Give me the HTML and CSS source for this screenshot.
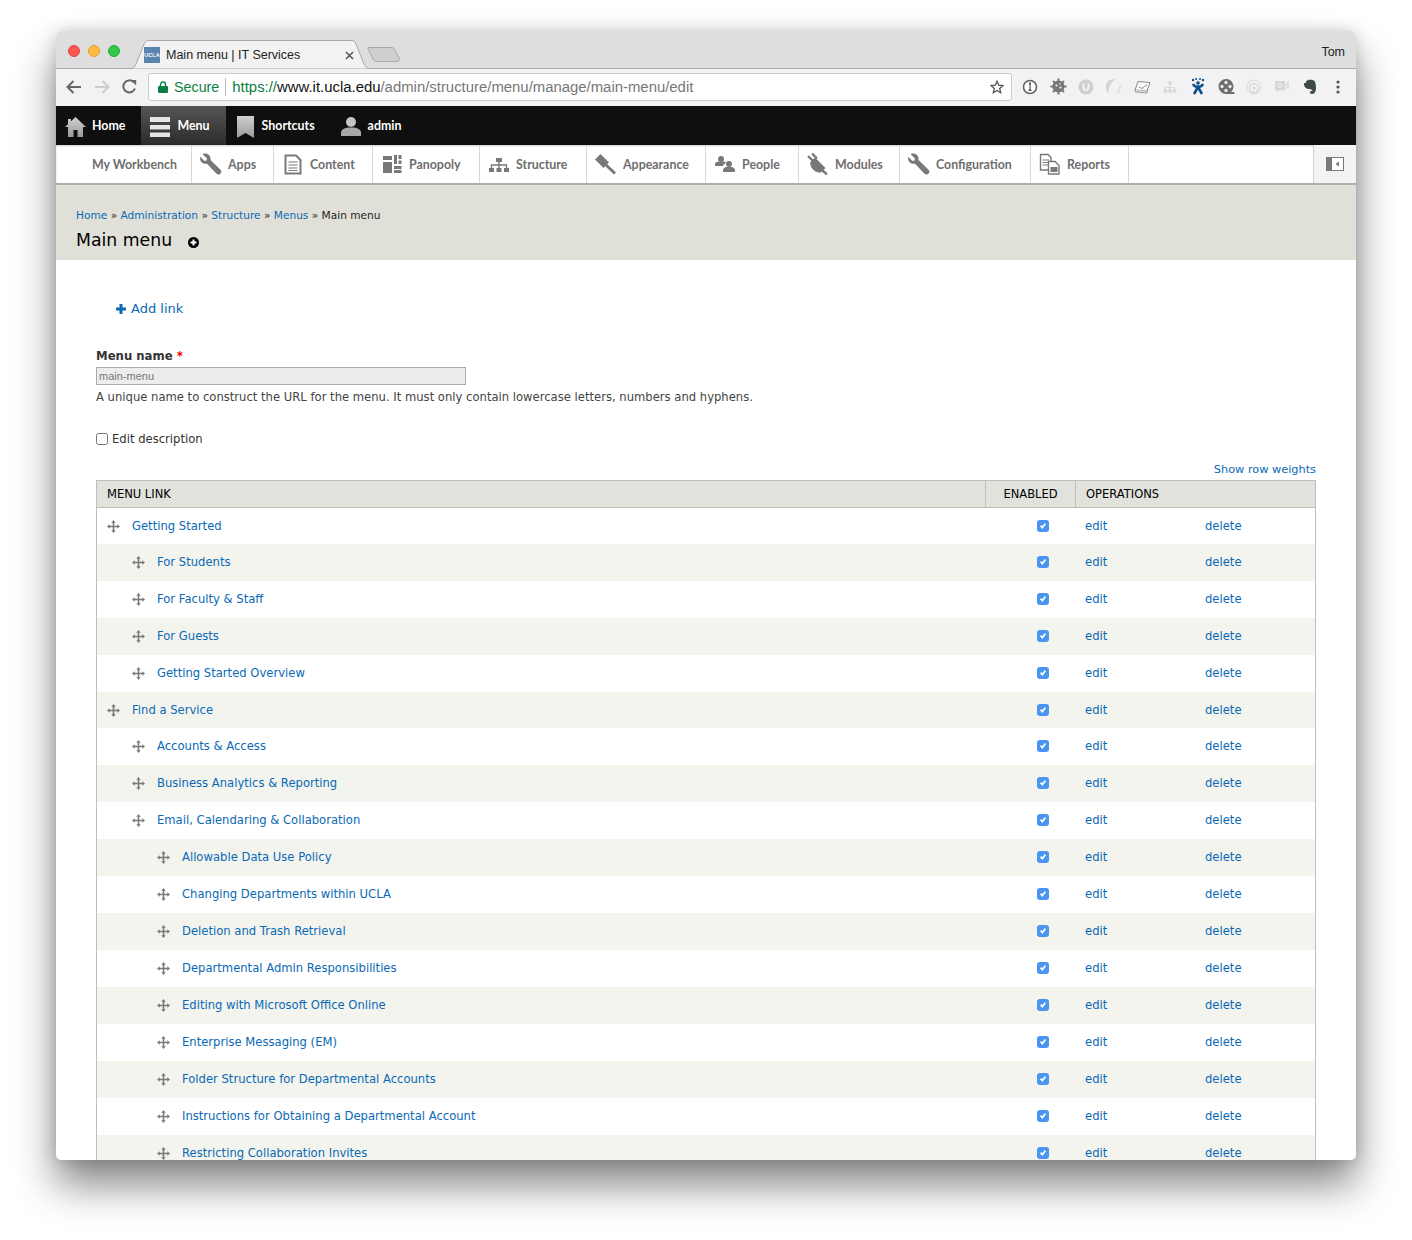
FILE: index.html
```html
<!DOCTYPE html>
<html lang="en">
<head>
<meta charset="utf-8">
<title>Main menu | IT Services</title>
<link rel="stylesheet" href="styles.css">
</head>
<body>
<svg class="defs" width="0" height="0" aria-hidden="true">
  <defs>
    <linearGradient id="grey" x1="0" y1="0" x2="0" y2="1"><stop offset="0" stop-color="#d0d0d0"/><stop offset="1" stop-color="#9a9a9a"/></linearGradient>
    <symbol id="drag" viewBox="0 0 13 13">
      <path d="M6.5 0 8.700 2.700H7.300V5.700H10.300V4.300L13 6.500 10.300 8.700V7.300H7.300V10.300H8.700L6.500 13 4.300 10.300H5.700V7.300H2.700V8.700L0 6.500 2.700 4.300V5.700H5.700V2.700H4.300z" fill="#7a7a7a"/>
    </symbol>
    <symbol id="wrench" viewBox="0 0 22 22">
      <path d="M2.500 1 7 5.500 6.500 7.500 4.500 8 .3 3.800C-.6 7.500 1.500 10.800 6 10.800l1-.1 9.500 10c1.200 1.100 2.900 1.100 4 0 1.100-1.100 1.200-2.800 0-4l-10-9.700C11.300 2.500 7 -.5 2.500 1z" fill="#787878"/>
    </symbol>
  </defs>
</svg>
<main class="window">
  <header class="titlebar">
    <div class="lights"><i class="light red"></i><i class="light yellow"></i><i class="light green"></i></div>
    <svg class="tab-shape" width="272" height="29" viewBox="0 0 272 29">
      <path d="M0 28.500H2C5 28.500 6 26 7 24L15 4C16 1.500 17 .5 20 .5H222C225 .5 226 1.500 227 4L235 24C236 26 237 28.500 240 28.500H272" fill="#f2f2f2" stroke="#a9a9a9"/>
      <path d="M240 7.500H262C264 7.500 265 8 266 10L270 18C271 20 270 21.500 268 21.500H248C246 21.500 245 21 244 19L240 11C239 9 238 7.500 240 7.500Z" fill="#cfcfcf" stroke="#a9a9a9"/>
    </svg>
    <div class="tab">
      <span class="favicon">UCLA</span>
      <span class="tab-title">Main menu | IT Services</span>
      <svg class="tab-close" width="9" height="9" viewBox="0 0 9 9"><path d="M1 1l7 7M8 1L1 8" stroke="#555" stroke-width="1.500"/></svg>
    </div>
    <span class="profile">Tom</span>
  </header>
  <div class="browserbar">
    <svg class="nav" width="16" height="14" viewBox="0 0 16 14"><path d="M15 7H2M7.500 1 1.500 7l6 6" fill="none" stroke="#666" stroke-width="2"/></svg>
    <svg class="nav" width="16" height="14" viewBox="0 0 16 14"><path d="M1 7h13M8.500 1l6 6-6 6" fill="none" stroke="#ccc" stroke-width="2"/></svg>
    <svg class="nav" width="15" height="15" viewBox="0 0 15 15"><path d="M13 9.500A6 6 0 1 1 11.500 3" fill="none" stroke="#666" stroke-width="2"/><path d="M9 0h5.500v5.500z" fill="#666" transform="translate(-.3 1)"/></svg>
    <div class="omnibox">
      <svg class="lock" width="10" height="12" viewBox="0 0 10 12"><path d="M1 5h8a1 1 0 0 1 1 1v5a1 1 0 0 1-1 1H1a1 1 0 0 1-1-1V6a1 1 0 0 1 1-1z" fill="#0b8043"/><path d="M2.500 5V3.500a2.500 2.500 0 0 1 5 0V5" fill="none" stroke="#0b8043" stroke-width="1.400"/></svg>
      <span class="secure">Secure</span>
      <span class="url"><span class="scheme">https://</span><span class="host">www.it.ucla.edu</span><span class="path">/admin/structure/menu/manage/main-menu/edit</span></span>
      <svg class="star" width="14" height="14" viewBox="0 0 14 14"><path d="M7 1.200 8.700 5.200 13 5.600 9.700 8.400 10.700 12.700 7 10.400 3.300 12.700 4.300 8.400 1 5.600 5.300 5.200Z" fill="none" stroke="#555" stroke-width="1.300"/></svg>
    </div>
    <div class="extensions">
      <svg width="16" height="16" viewBox="0 0 16 16"><circle cx="8" cy="8" r="6.500" fill="#fff" stroke="#666" stroke-width="1.600"/><path d="M7 3.500h2v2H8.600v5H9.500V12h-3v-1.500h.9v-5H7z" fill="#555"/></svg>
      <svg width="17" height="17" viewBox="0 0 17 17"><circle cx="8.500" cy="8.500" r="6" fill="#777"/><path d="M8.500 .5v16M.5 8.500h16M3 3l11 11M14 3 3 14" stroke="#777" stroke-width="2"/><circle cx="6.500" cy="7.500" r="1.100" fill="#f2f2f2"/><circle cx="10.500" cy="9.500" r="1.100" fill="#f2f2f2"/><circle cx="10" cy="6" r=".8" fill="#f2f2f2"/></svg>
      <svg width="16" height="16" viewBox="0 0 16 16"><circle cx="8" cy="8" r="7.500" fill="#cfcfcf"/><path d="M5.500 4.500V8.500a2.500 2.500 0 0 0 5 0V4.500" fill="none" stroke="#f2f2f2" stroke-width="2"/></svg>
      <svg width="16" height="16" viewBox="0 0 16 16"><path d="M9 .5A7.500 7.500 0 0 0 3 14c-1-5 1-9.500 6-13.500z" fill="#d4d4d4"/><path d="M9 15.500A7.500 7.500 0 0 0 13 3c1 4.500-.5 9.500-4 12.500z" fill="#e2e2e2"/></svg>
      <svg width="17" height="14" viewBox="0 0 17 14"><path d="M4 1.500 16 2.500 13 11 1 10z" fill="#f8f8f8" stroke="#8a8a8a"/><path d="M1 10l.5 2 11.500 1 .5-2" fill="#ddd" stroke="#8a8a8a" stroke-width=".8"/><path d="M5 7l3 1.500L13 4.500" fill="none" stroke="#8a8a8a"/></svg>
      <svg width="14" height="14" viewBox="0 0 14 14"><g fill="#d8d8d8"><circle cx="7" cy="3" r="2"/><circle cx="2.500" cy="11" r="2"/><circle cx="7" cy="11" r="2"/><circle cx="11.500" cy="11" r="2"/></g><path d="M7 3v8M2.500 11V7.500h9V11" fill="none" stroke="#d8d8d8"/></svg>
      <svg width="14" height="17" viewBox="0 0 14 17"><g fill="#0b4f8a"><circle cx="7" cy="5" r="1.800"/><circle cx="2" cy="2" r="1.200"/><circle cx="12" cy="2" r="1.200"/><circle cx="5" cy="1" r="1"/><circle cx="9" cy="1" r="1"/></g><path d="M2 6c1 2 3 3 5 3s4-1 5-3M3 16l4-7 4 7" fill="none" stroke="#0b4f8a" stroke-width="2.600"/></svg>
      <svg width="17" height="17" viewBox="0 0 17 17"><path d="M8 1a7.500 7.500 0 1 0 0 15h8.500v-2h-3.500A7.500 7.500 0 0 0 8 1z" fill="#6e6e6e"/><g fill="#e8e8e8"><circle cx="8" cy="4.500" r="1.700"/><circle cx="4" cy="8.500" r="1.700"/><circle cx="12" cy="8.500" r="1.700"/><circle cx="8" cy="12.500" r="1.700"/></g></svg>
      <svg width="16" height="16" viewBox="0 0 16 16"><g fill="none" stroke="#d8d8d8"><circle cx="8" cy="8" r="7"/><circle cx="8" cy="9" r="4.500" stroke-width="1.500"/></g><circle cx="8" cy="9" r="1.500" fill="#d8d8d8"/></svg>
      <svg width="16" height="14" viewBox="0 0 16 14"><path d="M1 1h10v9H5l-2 3v-3H1z" fill="#d6d6d6"/><path d="M12 3l3-1.500v8L12 8z" fill="#e0e0e0"/><circle cx="6" cy="5.500" r="2" fill="none" stroke="#f6f6f6"/></svg>
      <svg width="14" height="16" viewBox="0 0 14 16"><path d="M3 2.500 5 1c2-.5 5-.5 6.500 1 1 1 1.500 5 1.500 7 0 4-2 6-4 6-1.500 0-2.500-1-2-2.500.7-1 2-.5 2.500 0-.5-1.500-1-2.500-3-2.500C3.500 10 1 8 1 5.500V4h2z" fill="#3c4a4a"/></svg>
      <svg width="4" height="14" viewBox="0 0 4 14"><g fill="#555"><circle cx="2" cy="2" r="1.600"/><circle cx="2" cy="7" r="1.600"/><circle cx="2" cy="12" r="1.600"/></g></svg>
    </div>
  </div>

  <nav class="adminbar">
    <a class="bar-item">
      <svg width="21" height="20" viewBox="0 0 21 20"><path d="M10.500 0 21 10h-3v10h-5.500v-7h-4v7H3V10H0l3-2.900V2h3v2.300z" fill="url(#grey)"/></svg>Home
    </a>
    <a class="bar-item is-active">
      <svg width="20" height="20" viewBox="0 0 20 20"><path d="M0 0h20v5H0zM0 8h20v4.500H0zM0 15.500h20V20H0z" fill="#e4e4e4"/></svg>Menu
    </a>
    <a class="bar-item">
      <svg width="17" height="22" viewBox="0 0 17 22"><path d="M0 0h17v22l-8.500-5L0 22z" fill="url(#grey)"/></svg>Shortcuts
    </a>
    <a class="bar-item">
      <svg width="20" height="19" viewBox="0 0 20 19"><circle cx="10" cy="5" r="5" fill="#c4c4c4"/><path d="M0 19v-3.500C0 12.500 4 11 7 10.500h6c3 .5 7 2 7 5V19z" fill="#a8a8a8"/></svg>admin
    </a>
  </nav>

  <nav class="tray">
    <a class="tray-item"><span class="tray-icon"></span>My Workbench</a>
    <a class="tray-item"><svg class="tray-icon"><use href="#wrench"/></svg>Apps</a>
    <a class="tray-item"><svg class="tray-icon" viewBox="0 0 22 22"><path d="M3.500 2.500H14L18.500 7v13.500h-15z" fill="#fff" stroke="#787878" stroke-width="2"/><path d="M6.500 9h9M6.500 12h9M6.500 15h9M6.500 17.500h9" stroke="#787878" stroke-width="1.200"/></svg>Content</a>
    <a class="tray-item"><svg class="tray-icon" viewBox="0 0 22 22"><path d="M2 3h9v4H2zM2 9h9v11H2zM13 2h3v9h-3zM17.500 2h3v4h-3zM17.500 7.500h3v3.500h-3zM13 13h7.500v3h-7.500zM13 17h7.500v3h-7.500z" fill="#787878"/></svg>Panopoly</a>
    <a class="tray-item"><svg class="tray-icon" viewBox="0 0 22 22"><path d="M8 5h6v4H8zM1 15h5v4H1zM8.500 15h5v4h-5zM16 15h5v4h-5z" fill="#787878"/><path d="M11 9v6M3.500 15v-3h15v3" fill="none" stroke="#787878" stroke-width="1.400"/></svg>Structure</a>
    <a class="tray-item"><svg class="tray-icon" viewBox="0 0 22 22"><path d="M5.500 1 14 9.500l-5.500 5.500L0 6.500z" fill="#787878"/><path d="M11 12l9 8.500" stroke="#787878" stroke-width="3"/></svg>Appearance</a>
    <a class="tray-item"><svg class="tray-icon" viewBox="0 0 22 22"><circle cx="7" cy="6" r="3" fill="#787878"/><path d="M1 13v-2c0-1.500 2-2.500 3.500-2.500h5c1 0 2 .5 2.700 1.300-1.700.8-3 1.800-3.200 3.200z" fill="#787878"/><circle cx="15" cy="11" r="3" fill="#787878"/><path d="M9 19v-2c0-1.500 2-3 3.500-3h5c1.500 0 3.500 1.500 3.500 3v2z" fill="#787878"/></svg>People</a>
    <a class="tray-item"><svg class="tray-icon" viewBox="0 0 22 22"><path d="M8 4.500 18.500 15 14 19.500C9.500 20 5 17 3.500 12 3 10.500 3 9.500 3.500 9z" fill="#787878"/><path d="M1 3l5 5M5 .5l5 5M15 17l5 4.500" stroke="#787878" stroke-width="2.400"/></svg>Modules</a>
    <a class="tray-item"><svg class="tray-icon"><use href="#wrench"/></svg>Configuration</a>
    <a class="tray-item"><svg class="tray-icon" viewBox="0 0 22 22"><path d="M1.500 1.500H9L12 4.500V17H1.500z" fill="#fff" stroke="#787878" stroke-width="1.400"/><path d="M3.500 7H10M3.500 9.500H10M3.500 12H10" stroke="#787878"/><path d="M9.500 8.500H16l4 4v8.500H9.500z" fill="#fff" stroke="#787878" stroke-width="1.400"/><path d="M11.500 14h7v5h-7z" fill="#787878"/></svg>Reports</a>
    <span class="tray-spacer"></span>
    <a class="tray-toggle"><svg width="18" height="14" viewBox="0 0 18 14"><path d="M0 0h18v14H0z" fill="#787878"/><path d="M6 1h11v12H6z" fill="#fff"/><path d="M13 4.500v5L9.500 7z" fill="#787878"/></svg></a>
  </nav>

  <header class="page-head">
    <p class="crumbs"><a>Home</a> » <a>Administration</a> » <a>Structure</a> » <a>Menus</a> » Main menu</p>
    <h1 class="title">Main menu<svg class="shortcut" width="11" height="11" viewBox="0 0 11 11"><circle cx="5.500" cy="5.500" r="5.500" fill="#000"/><path d="M5.500 2.500v6M2.500 5.500h6" stroke="#fff" stroke-width="2"/></svg></h1>
  </header>

  <section class="content">
    <p class="action"><svg width="10" height="10" viewBox="0 0 10 10"><path d="M5 0v10M0 5h10" stroke="#0a69b5" stroke-width="3"/></svg><a>Add link</a></p>
    <label class="field-label">Menu name <span class="req">*</span></label>
    <input class="machine" type="text" value="main-menu" disabled>
    <p class="desc">A unique name to construct the URL for the menu. It must only contain lowercase letters, numbers and hyphens.</p>
    <label class="edit-desc"><input type="checkbox"> Edit description</label>
    <p class="weights"><a>Show row weights</a></p>

    <div class="table">
      <div class="thead"><span class="c-link">MENU LINK</span><span class="c-en">ENABLED</span><span class="c-ops">OPERATIONS</span></div>
      <div class="row is-top"><span class="c-link l0"><svg class="drag"><use href="#drag"/></svg><a>Getting Started</a></span><span class="c-en"><input type="checkbox" checked></span><span class="c-ops"><a class="op">edit</a><a>delete</a></span></div>
      <div class="row"><span class="c-link l1"><svg class="drag"><use href="#drag"/></svg><a>For Students</a></span><span class="c-en"><input type="checkbox" checked></span><span class="c-ops"><a class="op">edit</a><a>delete</a></span></div>
      <div class="row"><span class="c-link l1"><svg class="drag"><use href="#drag"/></svg><a>For Faculty &amp; Staff</a></span><span class="c-en"><input type="checkbox" checked></span><span class="c-ops"><a class="op">edit</a><a>delete</a></span></div>
      <div class="row"><span class="c-link l1"><svg class="drag"><use href="#drag"/></svg><a>For Guests</a></span><span class="c-en"><input type="checkbox" checked></span><span class="c-ops"><a class="op">edit</a><a>delete</a></span></div>
      <div class="row"><span class="c-link l1"><svg class="drag"><use href="#drag"/></svg><a>Getting Started Overview</a></span><span class="c-en"><input type="checkbox" checked></span><span class="c-ops"><a class="op">edit</a><a>delete</a></span></div>
      <div class="row is-top"><span class="c-link l0"><svg class="drag"><use href="#drag"/></svg><a>Find a Service</a></span><span class="c-en"><input type="checkbox" checked></span><span class="c-ops"><a class="op">edit</a><a>delete</a></span></div>
      <div class="row"><span class="c-link l1"><svg class="drag"><use href="#drag"/></svg><a>Accounts &amp; Access</a></span><span class="c-en"><input type="checkbox" checked></span><span class="c-ops"><a class="op">edit</a><a>delete</a></span></div>
      <div class="row"><span class="c-link l1"><svg class="drag"><use href="#drag"/></svg><a>Business Analytics &amp; Reporting</a></span><span class="c-en"><input type="checkbox" checked></span><span class="c-ops"><a class="op">edit</a><a>delete</a></span></div>
      <div class="row"><span class="c-link l1"><svg class="drag"><use href="#drag"/></svg><a>Email, Calendaring &amp; Collaboration</a></span><span class="c-en"><input type="checkbox" checked></span><span class="c-ops"><a class="op">edit</a><a>delete</a></span></div>
      <div class="row"><span class="c-link l2"><svg class="drag"><use href="#drag"/></svg><a>Allowable Data Use Policy</a></span><span class="c-en"><input type="checkbox" checked></span><span class="c-ops"><a class="op">edit</a><a>delete</a></span></div>
      <div class="row"><span class="c-link l2"><svg class="drag"><use href="#drag"/></svg><a>Changing Departments within UCLA</a></span><span class="c-en"><input type="checkbox" checked></span><span class="c-ops"><a class="op">edit</a><a>delete</a></span></div>
      <div class="row"><span class="c-link l2"><svg class="drag"><use href="#drag"/></svg><a>Deletion and Trash Retrieval</a></span><span class="c-en"><input type="checkbox" checked></span><span class="c-ops"><a class="op">edit</a><a>delete</a></span></div>
      <div class="row"><span class="c-link l2"><svg class="drag"><use href="#drag"/></svg><a>Departmental Admin Responsibilities</a></span><span class="c-en"><input type="checkbox" checked></span><span class="c-ops"><a class="op">edit</a><a>delete</a></span></div>
      <div class="row"><span class="c-link l2"><svg class="drag"><use href="#drag"/></svg><a>Editing with Microsoft Office Online</a></span><span class="c-en"><input type="checkbox" checked></span><span class="c-ops"><a class="op">edit</a><a>delete</a></span></div>
      <div class="row"><span class="c-link l2"><svg class="drag"><use href="#drag"/></svg><a>Enterprise Messaging (EM)</a></span><span class="c-en"><input type="checkbox" checked></span><span class="c-ops"><a class="op">edit</a><a>delete</a></span></div>
      <div class="row"><span class="c-link l2"><svg class="drag"><use href="#drag"/></svg><a>Folder Structure for Departmental Accounts</a></span><span class="c-en"><input type="checkbox" checked></span><span class="c-ops"><a class="op">edit</a><a>delete</a></span></div>
      <div class="row"><span class="c-link l2"><svg class="drag"><use href="#drag"/></svg><a>Instructions for Obtaining a Departmental Account</a></span><span class="c-en"><input type="checkbox" checked></span><span class="c-ops"><a class="op">edit</a><a>delete</a></span></div>
      <div class="row"><span class="c-link l2"><svg class="drag"><use href="#drag"/></svg><a>Restricting Collaboration Invites</a></span><span class="c-en"><input type="checkbox" checked></span><span class="c-ops"><a class="op">edit</a><a>delete</a></span></div>
    </div>
  </section>
</main>
</body>
</html>
```
FILE: styles.css
```css
* { box-sizing: border-box; }
html, body { margin: 0; height: 1240px; overflow: hidden; background: #fff; }
body { padding: 31px 56px 0; font-family: "DejaVu Sans", sans-serif; font-size: 11.600px; color: #333; }
.defs { position: absolute; }
a { color: #0a69b5; text-decoration: none; }
p, h1 { margin: 0; }

.window {
  width: 1300px; height: 1129px; overflow: hidden; background: #fff;
  border-radius: 6px 6px 5px 5px;
  box-shadow: 0 25px 42px rgba(0,0,0,.48), 0 0 16px rgba(0,0,0,.16);
}

.titlebar {
  position: relative; height: 38px; background: #dedede; border-bottom: 1px solid #a9a9a9;
  font-family: "Liberation Sans", sans-serif; font-size: 12.500px; color: #222;
  display: flex; align-items: center;
}
.lights { display: flex; gap: 8px; margin: 0 0 0 12px; position: relative; top: 1px; }
.light { display: block; width: 12px; height: 12px; border-radius: 50%; }
.red { background: #fc5753; border: 1px solid #df4744; }
.yellow { background: #fdbc40; border: 1px solid #de9f34; }
.green { background: #33c748; border: 1px solid #27aa35; }
.tab-shape { position: absolute; left: 73px; top: 9px; }
.tab { position: absolute; left: 88px; top: 16px; width: 210px; display: flex; align-items: center; }
.favicon { width: 16px; height: 16px; background: #5b84ae; color: #fff; font: bold 5.500px/16px "Liberation Sans", sans-serif; text-align: center; }
.tab-title { margin: 0 0 1px 6px; flex: 1; }
.tab-close { flex: none; }
.profile { position: absolute; right: 11px; top: 14px; }

.browserbar { height: 37px; padding-bottom: 2px; background: #f2f2f2; display: flex; align-items: center; }
.nav { margin-left: 10px; margin-right: 2px; }
.omnibox {
  margin-left: 9px; width: 864px; height: 28px; background: #fff; border: 1px solid #c9c9c9; border-radius: 3px;
  display: flex; align-items: center; padding: 0 7px 0 9px;
  font-family: "Liberation Sans", sans-serif; font-size: 14.900px; white-space: nowrap;
}
.secure { color: #0b8043; margin-left: 6px; padding-right: 6px; border-right: 1px solid #bbb; line-height: 18px; font-size: 14.300px; }
.url { margin-left: 6px; flex: 1; color: #777; }
.scheme { color: #0b8043; }
.host { color: #111; }
.extensions { display: grid; grid-auto-flow: column; grid-auto-columns: 28px; justify-items: center; align-items: center; padding-left: 4px; }

.adminbar { height: 39px; background: #0f0f0f; display: flex; }
.bar-item {
  display: flex; align-items: center; gap: 6px; padding: 0 16px 1px 9px; color: #fff;
  font-family: "Lato", sans-serif; font-weight: 700; font-size: 12.400px;
}
.bar-item svg { margin-top: 3px; }
.is-active { background: linear-gradient(#555, #2b2b2b); }
.bar-item:nth-child(2) { gap: 7px; }
.bar-item:nth-child(3) { gap: 8px; padding-left: 11px; padding-right: 26px; }
.bar-item:nth-child(4) { gap: 7px; padding-left: 0; }

.tray {
  height: 40px; background: #fff; border-bottom: 2px solid #b0b0a8; box-shadow: inset 0 1px 2px rgba(0,0,0,.2);
  display: grid; grid-template-columns: 136px 82px 99px 107px 107px 119px 93px 101px 131px 98px 1fr 43px;
  font-family: "Lato", sans-serif; font-weight: 700; font-size: 12.400px;
}
.tray-item { display: flex; align-items: center; gap: 6px; padding-left: 8px; color: #6e6e6e; border-right: 1px solid #d8d8d8; white-space: nowrap; }
.tray-icon { width: 22px; height: 22px; flex: none; }
.tray-toggle { display: flex; align-items: center; justify-content: center; background: #f3f3f3; border-left: 1px solid #cfcfcf; }

.page-head { height: 75px; background: #e0e0d8; padding: 23px 20px 0; }
.crumbs { font-size: 10.600px; line-height: 14px; color: #222; }
.title { font-size: 17.300px; font-weight: 400; color: #000; line-height: 24px; margin-top: 6px; display: flex; align-items: center; }
.shortcut { margin: 5px 0 0 16px; }

.content { padding: 0 40px; }
.action { margin: 41px 0 0 20px; display: flex; align-items: center; gap: 5px; font-size: 13px; line-height: 16px; }
.field-label { display: block; margin-top: 31px; font-weight: 700; font-size: 11.700px; line-height: 16px; color: #333; }
.req { color: #e00; }
.machine {
  display: block; width: 370px; height: 18px; margin: 3px 0 0; padding: 0 2px; background: #ededed; border: 1px solid #aaa;
  font: 11px "Liberation Sans", sans-serif; color: #777;
}
.desc { margin-top: 4px; line-height: 16px; color: #444; }
.edit-desc { display: flex; align-items: center; gap: 4px; margin-top: 26px; line-height: 16px; }
.edit-desc input { width: 12px; height: 12px; margin: 0; }
.weights { margin-top: 15px; text-align: right; line-height: 16px; font-size: 11.300px; }

.table { margin-top: 2px; border: 1px solid #bebfb9; border-width: 1px 1px 0; }
.thead { height: 27px; background: #e1e2dc; border-bottom: 1px solid #bebfb9; display: flex; align-items: center; color: #000; font-size: 11.500px; }
.thead span { height: 100%; display: flex; align-items: center; }
.c-link { flex: 1; }
.thead .c-link { padding-left: 10px; }
.c-en { width: 90px; }
.thead .c-en { width: 91px; justify-content: center; border-left: 1px solid #bebfb9; border-right: 1px solid #bebfb9; }
.c-ops { width: 240px; padding-left: 10px; }
.thead .c-ops { width: 239px; }
.row { height: 37px; display: flex; align-items: center; padding-bottom: 1px; }
.row.is-top { height: 36px; padding-bottom: 0; }
.row:nth-child(odd) { background: #f3f4ee; }
.row span { display: flex; align-items: center; }
.l0 { padding-left: 10px; }
.l1 { padding-left: 35px; }
.l2 { padding-left: 60px; }
.drag { width: 13px; height: 13px; margin: 1px 12px 0 0; flex: none; }
.c-en input {
  appearance: none; position: relative; width: 12px; height: 12px; margin: 0 0 0 52px;
  background: #4a94f2; border-radius: 3px;
}
.c-en input::before {
  content: ""; position: absolute; left: 3px; top: 3px; width: 6px; height: 6px; background: #fff;
  clip-path: polygon(0 55%, 20% 35%, 38% 55%, 80% 0, 100% 20%, 40% 100%);
}
.op { width: 120px; }
```
